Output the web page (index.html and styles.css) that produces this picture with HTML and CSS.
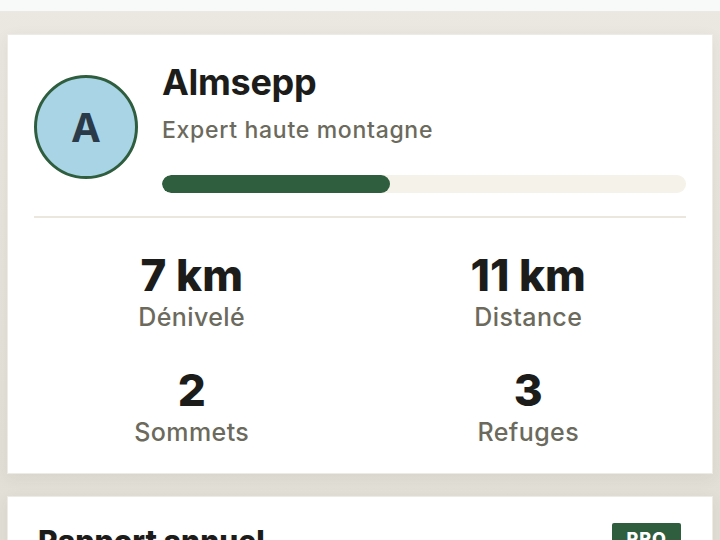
FILE: index.html
```html
<!DOCTYPE html>
<html lang="fr">
<head>
  <meta charset="UTF-8" />
  <title>Profil</title>
  <meta name="viewport" content="width=device-width, initial-scale=1.0" />
  <link rel="stylesheet" href="styles.css">
</head>
<body>
  <div class="topbar"></div>

  <main class="page">
    <!-- Profile card -->
    <section class="card profile">
      <div class="profile-head">
        <div class="avatar">A</div>
        <div class="profile-info">
          <h1 class="name">Almsepp</h1>
          <p class="rank">Expert haute montagne</p>
          <div class="progress">
            <div class="progress-fill" style="width: 43.5%"></div>
          </div>
        </div>
      </div>

      <div class="stats">
        <div class="stat">
          <div class="stat-value">7 km</div>
          <div class="stat-label">Dénivelé</div>
        </div>
        <div class="stat">
          <div class="stat-value">11 km</div>
          <div class="stat-label">Distance</div>
        </div>
        <div class="stat">
          <div class="stat-value">2</div>
          <div class="stat-label">Sommets</div>
        </div>
        <div class="stat">
          <div class="stat-value">3</div>
          <div class="stat-label">Refuges</div>
        </div>
      </div>
    </section>

    <!-- Annual report -->
    <section class="card report">
      <div class="report-head">
        <h2>Rapport annuel</h2>
        <span class="badge">PRO</span>
      </div>
    </section>
  </main>
</body>
</html>
```

FILE: styles.css
```css
* {
  box-sizing: border-box;
}

body {
  margin: 0;
  font-family: Inter, "Noto Sans", sans-serif;
  color: #1c1c1a;
  background: linear-gradient(#ebe8e2, #e2dfd7 500px);
  min-height: 540px;
  overflow: hidden;
}

.topbar {
  height: 12px;
  background: #f8f9f9;
  border-bottom: 1px solid #ece9e3;
}

.page {
  padding: 22px 7px 0;
  display: flex;
  flex-direction: column;
  gap: 22px;
}

.card {
  background: #fff;
  border: 1px solid #eeebe4;
  box-shadow: 0 4px 14px rgba(60, 50, 30, 0.07);
}

/* profile */
.profile {
  padding: 26px 26px 25px;
}

.profile-head {
  display: flex;
  align-items: center;
  gap: 24px;
  padding-bottom: 23px;
  border-bottom: 2px solid #ebe7dc;
}

.avatar {
  width: 104px;
  height: 104px;
  flex-shrink: 0;
  border-radius: 50%;
  border: 3px solid #2f5e3f;
  background: #a8d4e6;
  color: #2b3a48;
  font-size: 40px;
  font-weight: 700;
  display: flex;
  align-items: center;
  justify-content: center;
}

.profile-info {
  flex: 1;
}

.name {
  margin: 0;
  font-size: 36px;
  line-height: 43px;
  font-weight: 700;
  letter-spacing: -0.3px;
}

.rank {
  margin: 12px 0 0;
  font-size: 23px;
  line-height: 29px;
  color: #6b6a5d;
  font-weight: 500;
  letter-spacing: 0.7px;
}

.progress {
  margin-top: 30px;
  height: 18px;
  border-radius: 9px;
  background: #f5f2ea;
  overflow: hidden;
}

.progress-fill {
  height: 100%;
  border-radius: 9px;
  background: #2f5e3f;
}

.stats {
  display: grid;
  grid-template-columns: 1fr 1fr;
  column-gap: 21px;
  row-gap: 33px;
  padding-top: 33px;
  text-align: center;
}

.stat-value {
  font-size: 44px;
  line-height: 48px;
  font-weight: 800;
  letter-spacing: 0;
}

.stat-label {
  margin-top: 2px;
  font-size: 25px;
  line-height: 32px;
  font-weight: 500;
  color: #6b6a5d;
  letter-spacing: 0.4px;
}

/* report */
.report {
  padding: 26px 31px 26px 30px;
  min-height: 120px;
}

.report-head {
  display: flex;
  justify-content: space-between;
  align-items: flex-start;
}

.report-head h2 {
  margin: 0;
  font-size: 30px;
  line-height: 36px;
  font-weight: 800;
}

.badge {
  background: #2f5e3f;
  color: #fff;
  font-weight: 800;
  font-size: 18px;
  letter-spacing: 1px;
  padding: 5px 14px;
  border-radius: 2px;
}
```
